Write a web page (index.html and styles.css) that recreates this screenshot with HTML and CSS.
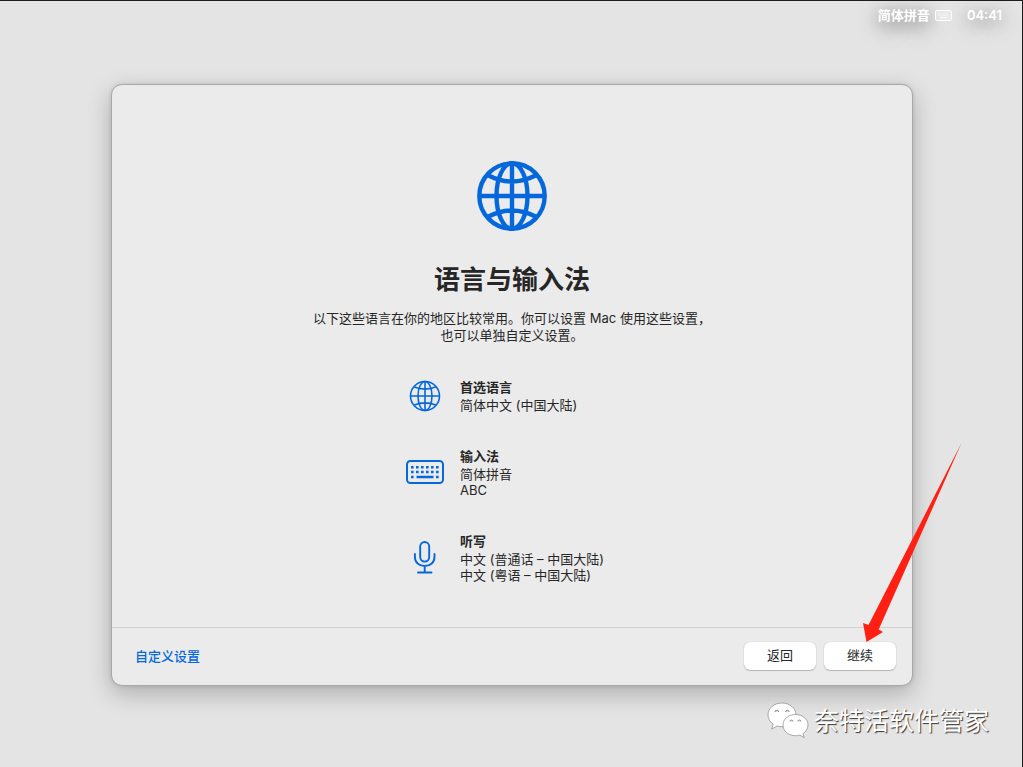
FILE: index.html
```html
<!DOCTYPE html>
<html lang="zh-CN">
<head>
<meta charset="utf-8">
<title>语言与输入法</title>
<link rel="stylesheet" href="styles.css">
</head>
<body>
<div class="screen">
  <header class="menubar">
    <span class="input-source">简体拼音
      <svg class="menu-keyboard" viewBox="0 0 17 11" aria-hidden="true">
        <rect x=".5" y=".5" width="16" height="10" rx="1.5" fill="#fff" fill-opacity=".25" stroke="#fff" stroke-width="1"/>
        <path d="M3 3.500h11M3 5.500h11" stroke="#fff" stroke-opacity=".6" stroke-width="1" stroke-dasharray="1 .6"/>
        <path d="M5 7.500h7" stroke="#fff" stroke-opacity=".9" stroke-width="1"/>
      </svg>
    </span>
    <time class="clock">04:41</time>
  </header>

  <main class="stage">
    <section class="dialog" aria-labelledby="title">
      <div class="content">
        <svg class="hero" viewBox="-35 -35 70 70" aria-hidden="true" fill="none" stroke="#0468dc" stroke-width="4.400">
          <circle r="32.700"/>
          <ellipse rx="15.500" ry="32.700"/>
          <path d="M0-33V33M-33 0H33M-23.500-20.500Q0-8.500 23.500-20.500M-23.500 20.500Q0 8.500 23.500 20.500"/>
        </svg>
        <h1 id="title" class="title">语言与输入法</h1>
        <p class="intro">以下这些语言在你的地区比较常用。你可以设置 Mac 使用这些设置，<br>也可以单独自定义设置。</p>
        <ul class="settings">
          <li class="setting">
            <svg class="setting-icon" viewBox="-19 -16 38 32" aria-hidden="true" fill="none" stroke="#0468dc" stroke-width="1.600">
              <circle r="14.500"/>
              <ellipse rx="7" ry="14.500"/>
              <path d="M0-14.500V14.500M-14.500 0H14.500M-11.300-9.200Q0-4.500 11.300-9.200M-11.300 9.200Q0 4.500 11.300 9.200"/>
            </svg>
            <div>
              <h2 class="setting-name">首选语言</h2>
              <p class="setting-value">简体中文 (中国大陆)</p>
            </div>
          </li>
          <li class="setting">
            <svg class="setting-icon" viewBox="0 0 38 32" aria-hidden="true">
              <rect x="1" y="4" width="36" height="22" rx="3.500" fill="none" stroke="#0468dc" stroke-width="2"/>
              <g fill="none" stroke="#0468dc" stroke-width="2.400">
                <path d="M5 10.200h28M5 15h28" stroke-dasharray="2.600 2.400"/>
                <path d="M5 20h2.600M10.500 20h17M30 20h2.600"/>
              </g>
            </svg>
            <div>
              <h2 class="setting-name">输入法</h2>
              <p class="setting-value">简体拼音<br>ABC</p>
            </div>
          </li>
          <li class="setting">
            <svg class="setting-icon" viewBox="0 1 38 32" aria-hidden="true" fill="none" stroke="#0468dc" stroke-width="1.900" stroke-linecap="round">
              <rect x="14.200" y="1" width="9" height="19.600" rx="4.500"/>
              <path d="M8.900 13v3c0 5.500 4 9 9.800 9s9.800-3.500 9.800-9v-3M18.700 25v6.500M12 31.500h13.500"/>
            </svg>
            <div>
              <h2 class="setting-name">听写</h2>
              <p class="setting-value">中文 (普通话 – 中国大陆)<br>中文 (粤语 – 中国大陆)</p>
            </div>
          </li>
        </ul>
      </div>
      <footer class="footer">
        <a class="customize" href="#">自定义设置</a>
        <div class="actions">
          <button class="button" type="button">返回</button>
          <div class="continue">
            <button class="button" type="button">继续</button>
            <svg class="pointer" viewBox="0 0 99 199" aria-hidden="true">
              <path fill="#ff2013" d="M98.500 0L5.500 182L0 180L3.500 199L20 189L15.700 186.500Z"/>
            </svg>
          </div>
        </div>
      </footer>
    </section>
  </main>

  <div class="watermark">
    <svg class="watermark-logo" viewBox="0 0 42 37" aria-hidden="true">
      <g stroke="#888" stroke-width=".7" fill="#fff">
        <path d="M15 1C7 1 1 6.300 1 13c0 4 2 7 5.200 9.200L4.700 27l5.600-3c1.500.5 3 .7 4.700.7 8 0 14-5.200 14-11.700S23 1 15 1z"/>
        <path d="M28.500 12.500C21.500 12.500 16 17 16 23s5.500 10.700 12.500 10.700c1.600 0 3-.2 4.300-.6l4.400 2.600-1.200-4C38.800 29.700 41 26.700 41 23c0-6-5.500-10.500-12.500-10.500z"/>
      </g>
      <g fill="#ddd" stroke="#777" stroke-width=".8">
        <path d="M8 10a1.800 1.800 0 0 1 3.600 0M18.500 10a1.800 1.800 0 0 1 3.600 0M23 19.500a1.500 1.500 0 0 1 3 0M31 19.500a1.500 1.500 0 0 1 3 0"/>
      </g>
    </svg>
    <span>奈特活软件管家</span>
  </div>
</div>
</body>
</html>
```
FILE: styles.css
```css
* {
  box-sizing: border-box;
}

body {
  margin: 0;
  font-family: Inter, "Noto Sans CJK SC", sans-serif;
  font-size: 13px;
  line-height: 16px;
  color: #262626;
}

h1, h2, p, ul {
  margin: 0;
  padding: 0;
}

.screen {
  position: relative;
  min-height: 100vh;
  border-top: 1px solid #1d1a20;
  border-right: 1px solid #1d1a20;
  background: #e4e4e4;
  overflow: hidden;
}

.menubar {
  display: flex;
  justify-content: flex-end;
  align-items: center;
  gap: 15px;
  height: 28px;
  padding-right: 20px;
  color: #fff;
  font-weight: 600;
  text-shadow: 0 3px 16px rgba(0, 0, 0, .35), 0 6px 24px rgba(0, 0, 0, .35);
}

.input-source {
  display: flex;
  align-items: center;
  gap: 5px;
}

.menu-keyboard {
  width: 17px;
  height: 11px;
}

.stage {
  display: flex;
  justify-content: center;
  padding: 55px 0 80px 2px;
}

.dialog {
  width: 100%;
  max-width: 802px;
  border: 1px solid #a8a8a8;
  border-radius: 11px;
  background: #ebebeb;
  box-shadow: 0 8px 24px rgba(0, 0, 0, .24), 0 0 4px rgba(0, 0, 0, .12);
}

.content {
  display: flex;
  flex-direction: column;
  align-items: center;
  padding: 76px 24px 44px;
}

.hero {
  width: 70px;
  height: 70px;
}

.title {
  margin-top: 33px;
  font-size: 26px;
  line-height: 32px;
  font-weight: 700;
}

.intro {
  margin-top: 14px;
  line-height: 17px;
  text-align: center;
}

.settings {
  display: grid;
  gap: 34px;
  min-width: 212px;
  margin-top: 34px;
  list-style: none;
}

.setting {
  display: flex;
  align-items: center;
  gap: 16px;
}

.setting-icon {
  flex: none;
  width: 38px;
  height: 32px;
  overflow: visible;
}

.setting-name {
  font-size: 13px;
  line-height: 18px;
  font-weight: 700;
}

.setting-value {
  margin-top: 1px;
}

.footer {
  display: flex;
  justify-content: space-between;
  align-items: center;
  padding: 14px 16px 15px 23px;
  border-top: 1px solid #d0d0d0;
}

.customize {
  color: #0468dc;
  font-weight: 500;
  text-decoration: none;
}

.actions {
  display: flex;
  gap: 8px;
}

.continue {
  position: relative;
}

.button {
  display: block;
  width: 72px;
  height: 28px;
  padding: 0 0 2px;
  border: 0;
  border-radius: 6px;
  background: #fff;
  box-shadow: 0 0 1px rgba(0, 0, 0, .3), 0 1px 1px rgba(0, 0, 0, .2);
  color: #262626;
  font: inherit;
}

.pointer {
  position: absolute;
  left: 39px;
  bottom: 100%;
  width: 99px;
  height: 199px;
  pointer-events: none;
}

.watermark {
  position: absolute;
  right: 33px;
  bottom: 28px;
  display: flex;
  align-items: center;
  gap: 5px;
  color: #fff;
  font-size: 25px;
  line-height: 36px;
  text-shadow: 1px 1px 1px #333;
}

.watermark-logo {
  width: 42px;
  height: 37px;
}
```
